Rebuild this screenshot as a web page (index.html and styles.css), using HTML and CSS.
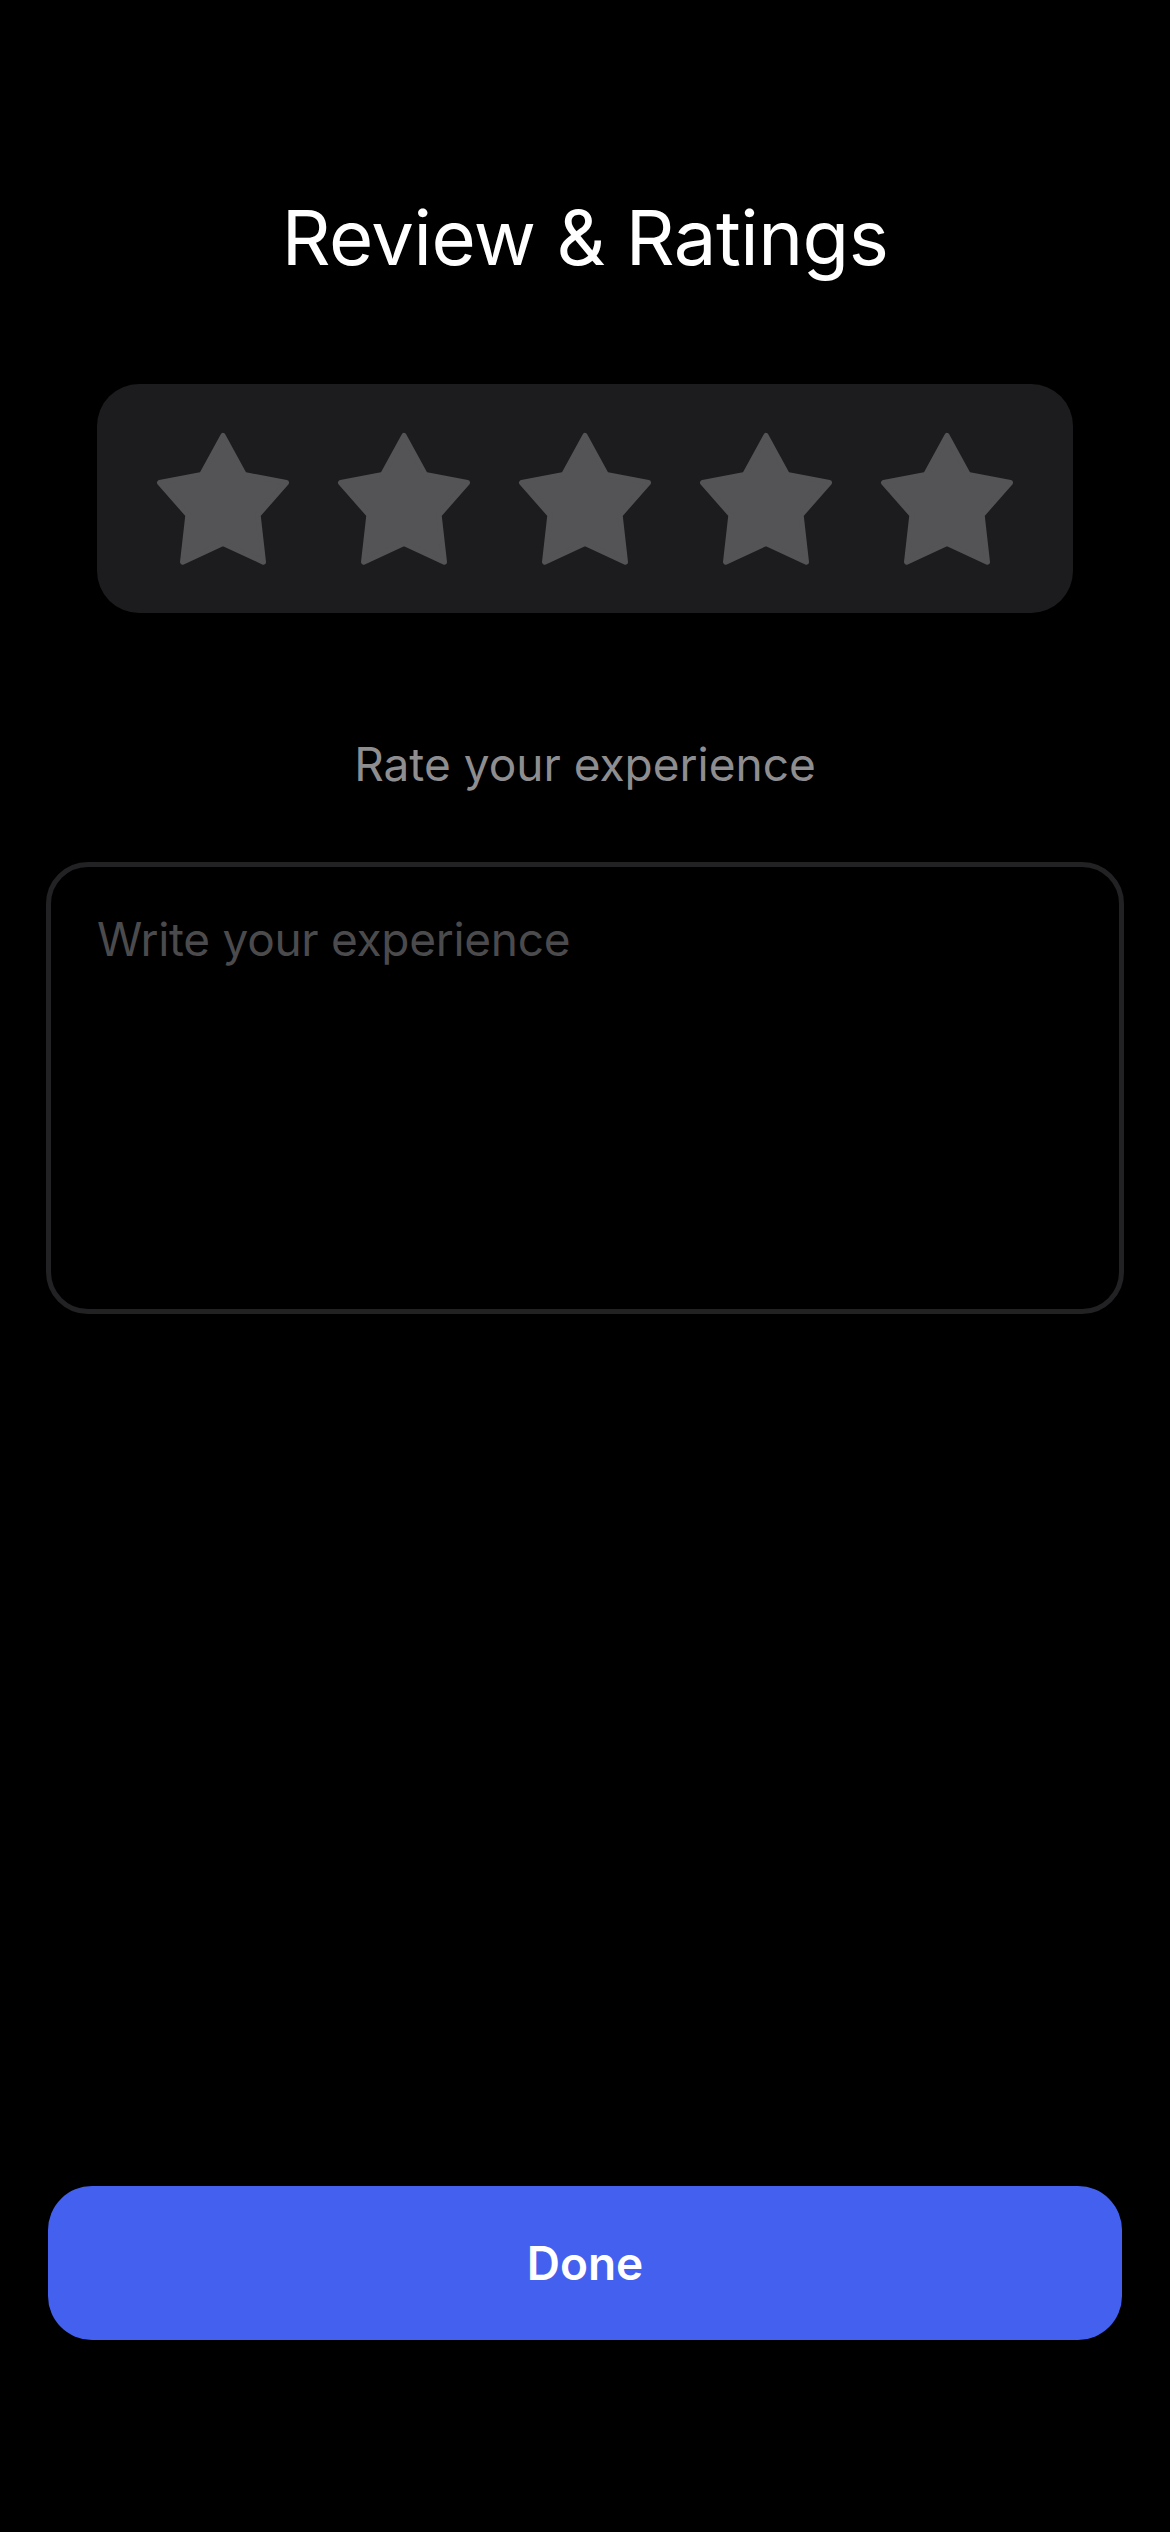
FILE: index.html
```html
<!DOCTYPE html>
<html lang="en">
<head>
<meta charset="utf-8">
<title>Review &amp; Ratings</title>
<link rel="stylesheet" href="styles.css">
</head>
<body>
<main class="screen">
  <h1 class="title">Review &amp; Ratings</h1>
  <div class="stars-panel">
    <svg class="star" viewBox="44 94 402 402"><path d="M245 105L309 222L435 246L350 343L366 484L245 428L124 484L140 343L55 246L181 222Z"/></svg>
    <svg class="star" viewBox="44 94 402 402"><path d="M245 105L309 222L435 246L350 343L366 484L245 428L124 484L140 343L55 246L181 222Z"/></svg>
    <svg class="star" viewBox="44 94 402 402"><path d="M245 105L309 222L435 246L350 343L366 484L245 428L124 484L140 343L55 246L181 222Z"/></svg>
    <svg class="star" viewBox="44 94 402 402"><path d="M245 105L309 222L435 246L350 343L366 484L245 428L124 484L140 343L55 246L181 222Z"/></svg>
    <svg class="star" viewBox="44 94 402 402"><path d="M245 105L309 222L435 246L350 343L366 484L245 428L124 484L140 343L55 246L181 222Z"/></svg>
  </div>
  <p class="rate-label">Rate your experience</p>
  <div class="review-box">
    <span class="placeholder">Write your experience</span>
  </div>
  <div class="spacer"></div>
  <button class="done-btn" type="button">Done</button>
</main>
</body>
</html>
```
FILE: styles.css
```css
* { box-sizing: border-box; }
html, body {
  margin: 0;
  padding: 0;
  background: #000;
}
body {
  font-family: Inter, "Noto Sans", "Liberation Sans", sans-serif;
  color: #fff;
}
.screen {
  width: 1170px;
  min-height: 2532px;
  display: flex;
  flex-direction: column;
  align-items: stretch;
}
.title {
  margin: 189px 0 0;
  text-align: center;
  font-size: 76px;
  font-weight: 400;
  line-height: 96px;
  letter-spacing: -0.5px;
  color: #fff;
}
.stars-panel {
  margin: 99px 97px 0;
  height: 229px;
  background: #1c1c1e;
  border-radius: 42px;
  display: flex;
  align-items: center;
  justify-content: center;
  gap: 47px;
}
.star {
  width: 134px;
  height: 134px;
  display: block;
}
.star path {
  fill: #545456;
  stroke: #545456;
  stroke-width: 16;
  stroke-linejoin: round;
}
.rate-label {
  margin: 123px 0 0;
  text-align: center;
  font-size: 46px;
  line-height: 56px;
  color: #8e8e90;
}
.review-box {
  margin: 70px 46px 0;
  height: 452px;
  border: 5px solid #222224;
  border-radius: 42px;
  padding: 44px 46px;
}
.placeholder {
  font-size: 46px;
  line-height: 56px;
  letter-spacing: -0.3px;
  color: #4b4b4d;
}
.spacer { flex: 1; }
.done-btn {
  margin: 0 48px 192px;
  height: 154px;
  border: none;
  border-radius: 44px;
  background: #4361ee;
  color: #fff;
  font-family: Inter, "Noto Sans", "Liberation Sans", sans-serif;
  font-size: 46px;
  font-weight: 600;
}
```
